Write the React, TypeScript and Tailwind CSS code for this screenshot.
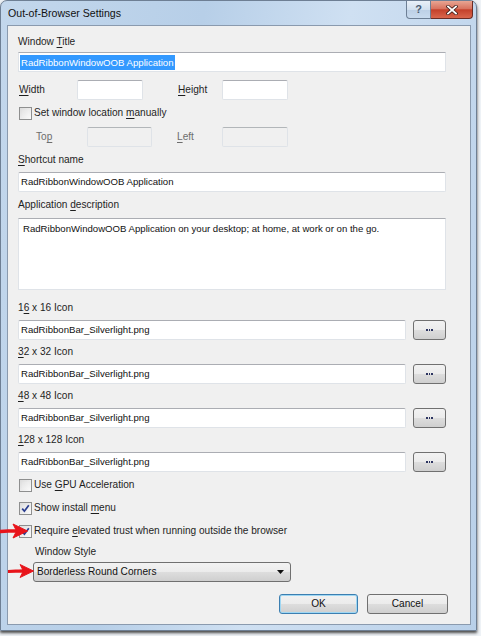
import React from 'react';

const font = { fontFamily: '"Liberation Sans", Arial, sans-serif' };

// Letter with an access-key underline
const U: React.FC<{ children: React.ReactNode }> = ({ children }) => (
  <span className="underline underline-offset-[2px] decoration-[1px]">{children}</span>
);

const Label: React.FC<{ children: React.ReactNode; className?: string }> = ({ children, className = '' }) => (
  <div className={`h-[16px] leading-[16px] text-[#1e1e1e] ${className}`}>{children}</div>
);

const TextBox: React.FC<{ value?: string; className?: string; disabled?: boolean }> = ({ value = '', className = '', disabled }) => (
  <div
    className={`h-[20px] rounded-[2px] border border-[#dfe3e8] border-t-[#abadb3] px-[2px] leading-[18px] text-[9.6px] text-[#111] ${
      disabled ? 'bg-[#f0f0f0] border-[#c6cacd] border-t-[#b2b6b9]' : 'bg-white'
    } ${className}`}
  >
    {value}
  </div>
);

const Button: React.FC<{ children: React.ReactNode; className?: string; focused?: boolean }> = ({ children, className = '', focused }) => (
  <div
    className={`h-[20px] rounded-[3px] border flex items-center justify-center text-[#111] bg-[linear-gradient(#f2f2f2_0%,#ebebeb_50%,#dddddd_51%,#cfcfcf_100%)] ${
      focused ? 'border-[#3c7fb1] shadow-[inset_0_0_0_1px_#9fd7f3]' : 'border-[#707070]'
    } ${className}`}
  >
    {children}
  </div>
);

const CheckBox: React.FC<{ checked?: boolean }> = ({ checked }) => (
  <div className="ml-[1px] w-[13px] h-[13px] border border-[#8e8f8f] bg-[linear-gradient(135deg,#dcdcdc,#fbfbfb)] p-[2px]">
    <div className="w-full h-full bg-[linear-gradient(135deg,#e4e4e4,#f7f7f7)] relative">
      {checked && (
        <svg viewBox="0 0 9 9" className="absolute -left-[1px] -top-[1px] w-[9px] h-[9px]">
          <path d="M1.2 4.6 L3.4 7.2 L7.8 1.2" fill="none" stroke="#2a3d8f" strokeWidth="1.7" />
        </svg>
      )}
    </div>
  </div>
);

const Check: React.FC<{ checked?: boolean; children: React.ReactNode; className?: string }> = ({ checked, children, className = '' }) => (
  <div className={`h-[16px] flex items-center gap-[2px] ${className}`}>
    <CheckBox checked={checked} />
    <span className="leading-[16px] text-[#1e1e1e]">{children}</span>
  </div>
);

const IconRow: React.FC<{ label: React.ReactNode; className?: string }> = ({ label, className = '' }) => (
  <>
    <Label className={className}>{label}</Label>
    <div className="mt-[4px] flex items-center gap-[7px]">
      <TextBox value="RadRibbonBar_Silverlight.png" className="w-[388px]" />
      <Button className="w-[33px]">
        <div className="flex gap-[1px]">
          <span className="w-[1.5px] h-[1.5px] bg-[#2d3561]" />
          <span className="w-[1.5px] h-[1.5px] bg-[#2d3561]" />
          <span className="w-[1.5px] h-[1.5px] bg-[#2d3561]" />
        </div>
      </Button>
    </div>
  </>
);

const Arrow: React.FC<{ className: string }> = ({ className }) => (
  <svg viewBox="0 0 28 16" className={`absolute ${className}`}>
    <path d="M0.5 8.5 C6 7.6 11 8.4 17 7.9" fill="none" stroke="#e8141b" strokeWidth="3.4" strokeLinecap="round" />
    <path d="M13 1 L27.5 8 L13 15 L16.5 8 Z" fill="#e8141b" stroke="#e8141b" strokeWidth="1" strokeLinejoin="round" />
  </svg>
);

const App: React.FC = () => {
  return (
    <div className="relative w-[481px] h-[636px] bg-[#eef2f6] text-[10.1px]" style={font}>
      {/* Window frame */}
      <div className="w-[477px] h-[631px] rounded-t-[7px] border border-[#6e7f94] bg-[linear-gradient(100deg,#c3d7ec_0%,#b7cfe8_35%,#cfe0f2_60%,#b9d0e9_100%)] flex flex-col shadow-[0_2px_3px_#4a4a4a]">
        {/* Title bar */}
        <div className="h-[24px] flex items-start">
          <div className="pl-[7px] pt-[5px] text-[10.6px] leading-[14px] text-[#111]">Out-of-Browser Settings</div>
          <div className="ml-auto mr-[3px] flex">
            <div className="w-[25px] h-[18px] rounded-bl-[4px] border border-t-0 border-[#6d7f95] bg-[linear-gradient(#e9f0f8_0%,#d2e0ef_50%,#bccfe5_51%,#c9dbee_100%)] flex items-center justify-center text-[11px] text-[#4a5a70] font-bold">
              ?
            </div>
            <div className="w-[42px] h-[18px] rounded-br-[4px] border border-t-0 border-l-0 border-[#6b2c25] bg-[linear-gradient(#e8a593_0%,#d8735f_45%,#c4412b_52%,#d9664d_100%)] flex items-center justify-center">
              <svg viewBox="0 0 12 10" className="w-[12px] h-[10px]">
                <path d="M2 1.5 L10 8.5 M10 1.5 L2 8.5" stroke="#3b1a16" strokeWidth="3.4" strokeLinecap="square" />
                <path d="M2 1.5 L10 8.5 M10 1.5 L2 8.5" stroke="#ffffff" strokeWidth="1.8" strokeLinecap="square" />
              </svg>
            </div>
          </div>
        </div>

        {/* Client area */}
        <div className="ml-[6px] mr-[5px] mb-[5px] flex-1 border border-[#8a9aae] bg-[#f0f0f0] pl-[10px] pr-[24px] pt-[8px] flex flex-col">
          <Label>
            Window <U>T</U>itle
          </Label>
          <div className="mt-[2px] h-[20px] border border-[#dfe3e8] border-t-[#abadb3] bg-white px-[1px] py-[1px] flex items-center">
            <span className="bg-[#3399ff] text-white text-[9.6px] leading-[15px] px-[1px]">RadRibbonWindowOOB Application</span>
          </div>

          <div className="mt-[8px] flex items-center">
            <Label className="w-[59px] pl-[1px]">
              <U>W</U>idth
            </Label>
            <TextBox className="w-[66px]" />
            <Label className="ml-[35px] w-[44px]">
              <U>H</U>eight
            </Label>
            <TextBox className="w-[66px]" />
          </div>

          <Check className="mt-[5px]">
            Set window location <U>m</U>anually
          </Check>

          <div className="mt-[6px] flex items-center">
            <Label className="ml-[18px] w-[51px] text-[#6d6d6d]">
              To<U>p</U>
            </Label>
            <TextBox disabled className="w-[65px]" />
            <Label className="ml-[25px] w-[45px] text-[#6d6d6d]">
              <U>L</U>eft
            </Label>
            <TextBox disabled className="w-[66px]" />
          </div>

          <Label className="mt-[5px]">
            <U>S</U>hortcut name
          </Label>
          <TextBox className="mt-[4px]" value="RadRibbonWindowOOB Application" />

          <Label className="mt-[5px]">
            Application <U>d</U>escription
          </Label>
          <div className="mt-[5px] h-[72px] border border-[#dfe3e8] border-t-[#abadb3] bg-white px-[4px] py-[2px] leading-[16px] text-[9.6px] text-[#111]">
            RadRibbonWindowOOB Application on your desktop; at home, at work or on the go.
          </div>

          <IconRow className="mt-[10px]" label={<>1<U>6</U> x 16 Icon</>} />
          <IconRow className="mt-[4px]" label={<><U>3</U>2 x 32 Icon</>} />
          <IconRow className="mt-[4px]" label={<><U>4</U>8 x 48 Icon</>} />
          <IconRow className="mt-[4px]" label={<><U>1</U>28 x 128 Icon</>} />

          <Check className="mt-[5px]">
            Use <U>G</U>PU Acceleration
          </Check>
          <Check checked className="mt-[7px]">
            Show install <U>m</U>enu
          </Check>
          <Check checked className="mt-[7px]">
            Require <U>e</U>levated trust when running outside the browser
          </Check>

          <Label className="mt-[5px] ml-[17px]">Window Style</Label>
          <div className="mt-[2px] ml-[15px] w-[258px] h-[20px] rounded-[3px] border border-[#707070] bg-[linear-gradient(#f2f2f2_0%,#ebebeb_50%,#dddddd_51%,#cfcfcf_100%)] flex items-center pl-[3px] pr-[6px]">
            <span className="text-[#111] leading-[16px]">Borderless Round Corners</span>
            <svg viewBox="0 0 7 4" className="ml-auto w-[7px] h-[4px]">
              <path d="M0 0 H7 L3.5 4 Z" fill="#111" />
            </svg>
          </div>

          <div className="mt-[12px] flex justify-end gap-[9px] -mr-[2px]">
            <Button focused className="w-[79px]">OK</Button>
            <Button className="w-[81px]">Cancel</Button>
          </div>
        </div>
      </div>

      <Arrow className="left-[0px] top-[523px] w-[28px] h-[16px]" />
      <Arrow className="left-[8px] top-[563px] w-[26px] h-[16px]" />
    </div>
  );
};

export default App;
